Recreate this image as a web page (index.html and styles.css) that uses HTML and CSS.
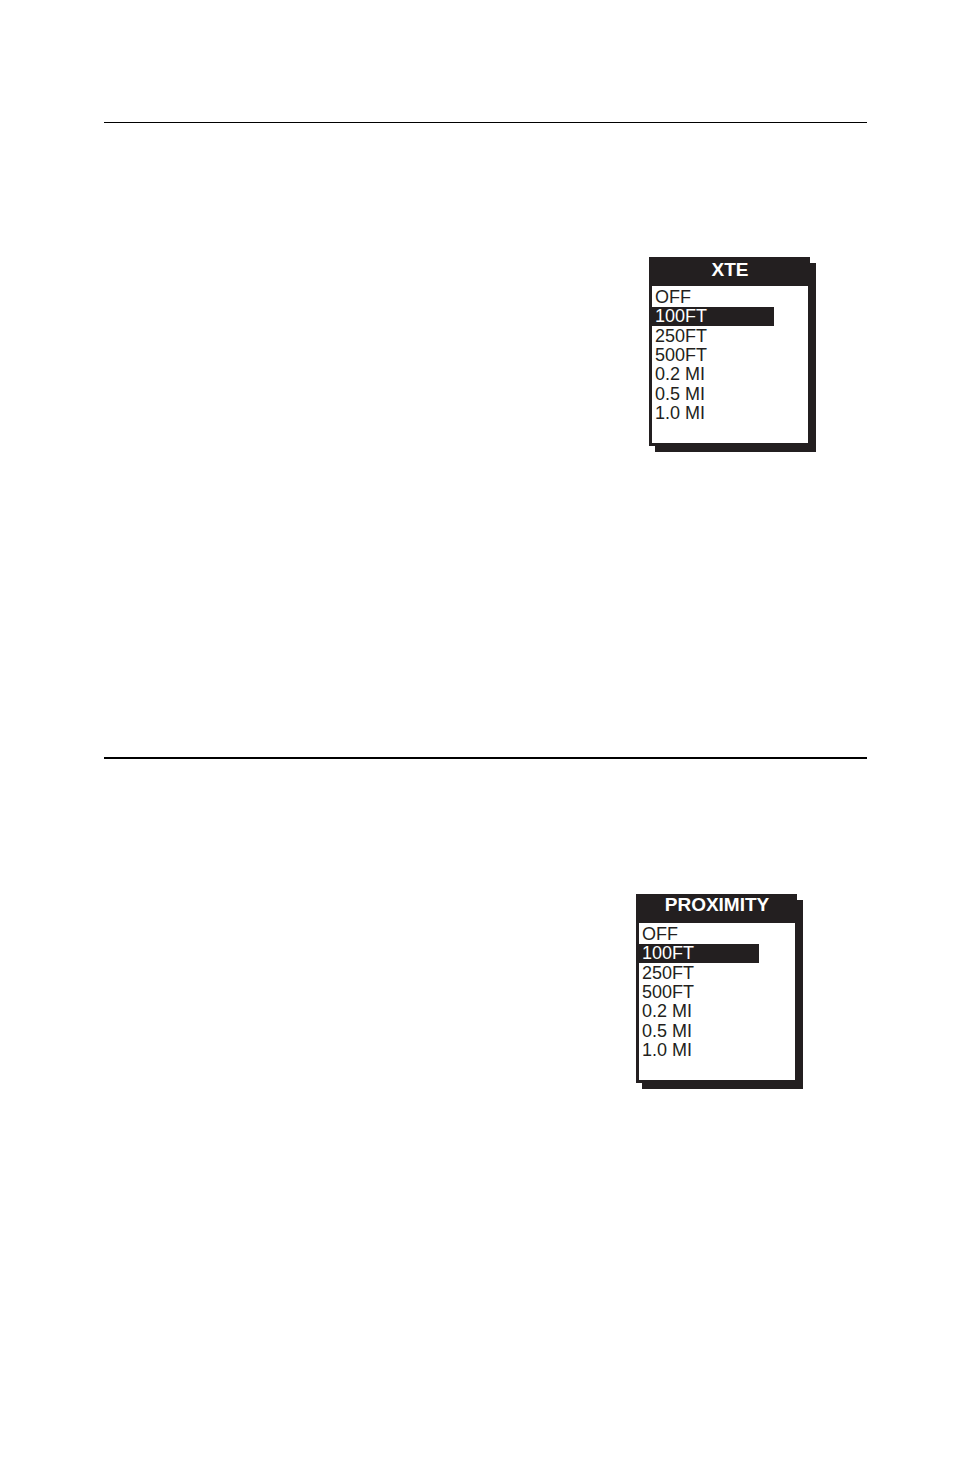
FILE: index.html
```
<!DOCTYPE html>
<html lang="en">
<head>
<meta charset="utf-8">
<title>Alarm menus</title>
<link rel="stylesheet" href="styles.css">
</head>
<body>
<main class="page">
  <section class="section section-xte">
    <div class="menu">
      <h2 class="menu-title">XTE</h2>
      <div class="menu-list">
        <button class="option" type="button">OFF</button>
        <button class="option selected" type="button">100FT</button>
        <button class="option" type="button">250FT</button>
        <button class="option" type="button">500FT</button>
        <button class="option" type="button">0.2 MI</button>
        <button class="option" type="button">0.5 MI</button>
        <button class="option" type="button">1.0 MI</button>
      </div>
    </div>
  </section>
  <section class="section section-proximity">
    <div class="menu">
      <h2 class="menu-title">PROXIMITY</h2>
      <div class="menu-list">
        <button class="option" type="button">OFF</button>
        <button class="option selected" type="button">100FT</button>
        <button class="option" type="button">250FT</button>
        <button class="option" type="button">500FT</button>
        <button class="option" type="button">0.2 MI</button>
        <button class="option" type="button">0.5 MI</button>
        <button class="option" type="button">1.0 MI</button>
      </div>
    </div>
  </section>
</main>
</body>
</html>
```
FILE: styles.css
```
* {
  box-sizing: border-box;
}

body {
  margin: 0;
  background: #fff;
  color: #231f20;
  font-family: "Liberation Sans", Arial, sans-serif;
}

.page {
  padding: 122px 87px 0 104px;
}

.section {
  display: flex;
  justify-content: flex-end;
  align-items: flex-start;
}

.section-xte {
  border-top: 1px solid #000;
  padding: 134px 57px 311px 0;
}

.section-proximity {
  border-top: 2px solid #000;
  padding: 135px 70px 386px 0;
}

.menu {
  width: 161px;
  border: 3px solid #231f20;
  border-top: 0;
  border-right-width: 2px;
  background: #fff;
  box-shadow: 6px 6px 0 #231f20;
}

.menu-title {
  margin: 0;
  padding-bottom: 3px;
  background: #231f20;
  color: #fff;
  font-size: 19px;
  line-height: 26px;
  font-weight: bold;
  text-align: center;
}

.section-proximity .menu-title {
  padding-bottom: 7px;
  line-height: 22px;
}

.menu-list {
  display: flex;
  flex-direction: column;
  justify-content: space-between;
  height: 157px;
  padding: 2px 36px 20px 0;
}

.section-xte .menu-list {
  padding-right: 34px;
}

.option {
  display: block;
  height: 19px;
  padding: 0 3px;
  border: 0;
  background: none;
  color: inherit;
  font: 18px/19px "Liberation Sans", Arial, sans-serif;
  text-align: left;
}

.option.selected {
  background: #231f20;
  color: #fff;
}
```
